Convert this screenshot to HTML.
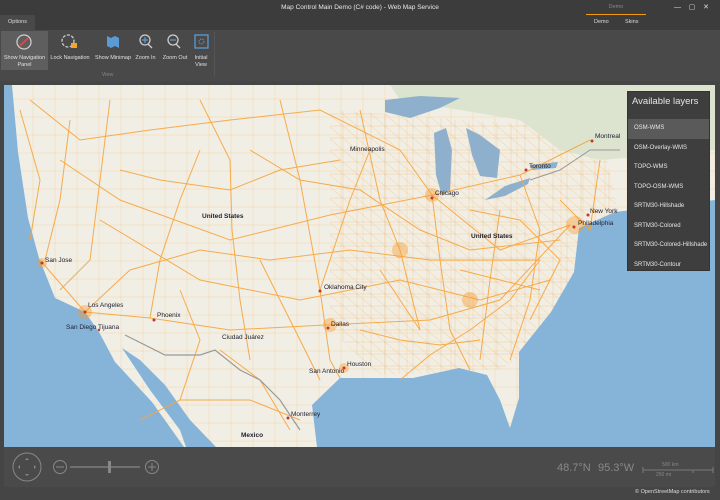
<!DOCTYPE html>
<html><head><meta charset="utf-8"><style>
*{margin:0;padding:0;box-sizing:border-box}
body{width:720px;height:500px;background:#454545;font-family:"Liberation Sans",sans-serif;position:relative;overflow:hidden;color:#ddd}
.abs{position:absolute}
.title{left:0;top:0;width:720px;height:15px;background:#3c3c3c;font-size:6.5px;text-align:center;line-height:15px;color:#e8e8e8}
.tabs{left:0;top:15px;width:720px;height:15px;background:#3c3c3c}
.ribbon{left:0;top:30px;width:720px;height:51px;background:#494949}
.btn{position:absolute;top:32px;font-size:5.5px;color:#e0e0e0;text-align:center;line-height:7px}
.lay{left:627px;top:91px;width:83px;height:180px;background:#3e3e3e;border:1px solid #333}
.lay div{height:19.5px;font-size:6px;padding-left:6px;line-height:19.5px;color:#e6e6e6}
.lbl{font-size:6.5px;color:#223;position:absolute;white-space:nowrap}
</style></head><body>
<div class="abs title">Map Control Main Demo (C# code) - Web Map Service</div>
<div class="abs" style="left:586px;top:0;width:60px;height:15px;font-size:5.5px;color:#888;text-align:center;line-height:15px">Demo</div>
<div class="abs" style="left:586px;top:14px;width:60px;height:1px;background:#f39c12"></div>
<div class="abs" style="left:674px;top:0;font-size:7px;line-height:15px;color:#ddd">—&nbsp;&nbsp;&nbsp;&nbsp;▢&nbsp;&nbsp;&nbsp;&nbsp;✕</div>
<div class="abs tabs"></div>
<div class="abs" style="left:0;top:15px;width:35px;height:15px;background:#494949;font-size:5.5px;line-height:15px;text-align:center">Options</div>
<div class="abs" style="left:594px;top:15px;font-size:5.5px;line-height:15px">Demo</div>
<div class="abs" style="left:625px;top:15px;font-size:5.5px;line-height:15px">Skins</div>
<div class="abs ribbon"></div>
<div class="abs" style="left:1px;top:31px;width:47px;height:39px;background:#5e5e5e"></div>
<svg class="abs" style="left:0;top:30px" width="220" height="30">
<circle cx="24" cy="12" r="7" fill="none" stroke="#ccc" stroke-width="1.3"/><path d="M20 16 L28 8" stroke="#e04848" stroke-width="1.8"/>
<circle cx="68" cy="11" r="6" fill="none" stroke="#ccc" stroke-width="1.3" stroke-dasharray="3 1.5"/><rect x="71" y="13" width="6" height="5" fill="#f5a623"/>
<path d="M107 6 L111 8 L115 6 L119 8 L119 18 L115 16 L111 18 L107 16Z" fill="#5b9bd5"/>
<circle cx="145" cy="10" r="5" fill="none" stroke="#ccc" stroke-width="1.3"/><path d="M148 14 L152 18" stroke="#ccc" stroke-width="1.3"/><path d="M145 7v6M142 10h6" stroke="#5b9bd5" stroke-width="1.2"/>
<circle cx="173" cy="10" r="5" fill="none" stroke="#ccc" stroke-width="1.3"/><path d="M176 14 L180 18" stroke="#ccc" stroke-width="1.3"/><path d="M170 10h6" stroke="#5b9bd5" stroke-width="1.2"/>
<rect x="195" y="5" width="13" height="13" fill="none" stroke="#5b9bd5" stroke-width="1.3"/><circle cx="201.5" cy="11.5" r="2.5" fill="none" stroke="#5b9bd5" stroke-dasharray="1.5 1"/>
</svg>
<div class="btn" style="left:2px;width:45px;top:55px">Show Navigation<br>Panel</div>
<div class="btn" style="left:50px;width:40px;top:55px">Lock Navigation</div>
<div class="btn" style="left:93px;width:40px;top:55px">Show Minimap</div>
<div class="btn" style="left:133px;width:25px;top:55px">Zoom In</div>
<div class="btn" style="left:160px;width:30px;top:55px">Zoom Out</div>
<div class="btn" style="left:190px;width:22px;top:55px">Initial<br>View</div>
<div class="btn" style="left:95px;width:25px;top:72px;color:#888">View</div>
<div class="abs" style="left:214px;top:32px;width:1px;height:44px;background:#555"></div>

<svg class="abs" style="left:4px;top:85px" width="711" height="402" viewBox="4 85 711 402">
<defs>
<pattern id="grid" width="14" height="12" patternUnits="userSpaceOnUse"><path d="M0 6h14M7 0v12M0 0l14 12" stroke="#f7a43a" stroke-width="0.5" opacity="0.45" fill="none"/></pattern>
<pattern id="grid2" width="22" height="18" patternUnits="userSpaceOnUse"><path d="M0 9h22M11 0v18" stroke="#f7a43a" stroke-width="0.5" opacity="0.35" fill="none"/></pattern>
</defs>
<rect x="4" y="85" width="711" height="402" fill="#f1eee6"/>
<rect x="4" y="85" width="711" height="402" fill="url(#grid2)"/>
<path d="M330 110 L600 130 L620 220 L560 330 L500 370 L380 375 L330 330Z" fill="url(#grid)"/>
<path d="M390 85 L715 85 L715 150 L600 160 L560 150 L520 120 L460 110 L400 100Z" fill="#dce4cf"/>
<path d="M4 85 L12 85 L18 152 L28 218 L39 258 L55 298 L85 312 L99 332 L115 362 L152 402 L184 447 L190 487 L4 487Z" fill="#86b3d8"/>
<path d="M122 348 L140 360 L165 385 L190 420 L216 447 L225 487 L200 487 L180 430 L150 390Z" fill="#86b3d8"/>
<path d="M317 487 L317 447 L312 405 L340 378 L381 378 L413 378 L459 368 L487 375 L500 400 L510 428 L519 398 L519 352 L551 312 L574 272 L579 228 L615 212 L715 200 L715 487Z" fill="#86b3d8"/>
<path d="M385 100 L420 96 L460 98 L440 108 L410 118 L385 112Z" fill="#8fb0cc"/>
<path d="M434 133 L446 128 L452 150 L450 190 L442 196 L436 175Z" fill="#8fb0cc"/>
<path d="M466 128 L480 135 L500 150 L497 178 L480 176 L472 155Z" fill="#8fb0cc"/>
<path d="M485 200 L505 186 L530 178 L528 184 L505 196Z" fill="#8fb0cc"/>
<path d="M530 165 L558 162 L556 168 L532 170Z" fill="#8fb0cc"/>
<g stroke="#f7a43a" stroke-width="1" fill="none" opacity="0.9">
<path d="M30 100 L80 140 L150 130 L230 120 L320 110 L400 150 L432 195 L520 175 L590 140"/>
<path d="M40 260 L85 312 L150 318 L230 330 L325 325 L430 320 L500 300 L570 225"/>
<path d="M60 160 L120 200 L230 240 L330 215 L432 195 L500 250 L570 225"/>
<path d="M85 312 L130 270 L200 250 L270 260 L350 250 L430 260 L540 260"/>
<path d="M320 290 L325 325 L330 360 L340 378 M320 290 L350 200 L370 150"/>
<path d="M232 230 L240 300 L250 360 M150 318 L160 260 L180 200 L200 150"/>
<path d="M432 195 L440 260 L450 330 L470 370 M500 210 L490 280 L480 360"/>
<path d="M70 120 L60 200 L45 260 M520 175 L540 230 L530 300 L510 360"/>
<path d="M100 220 L200 280 L300 300 L400 280 L480 300 L550 280"/>
<path d="M250 150 L300 180 L360 190 L420 230 L470 250 L560 240"/>
<path d="M120 170 L160 180 L230 190 L280 170 L340 160"/>
<path d="M360 330 L400 340 L440 345 L480 340 M380 270 L400 300 L420 330"/>
<path d="M140 420 L180 400 L250 400 L300 420 M220 350 L260 380 L290 430"/>
<path d="M560 200 L590 230 L600 160 M460 270 L500 280 L540 290"/>
<path d="M20 110 L40 180 L30 240 M110 100 L100 180 L90 260 L60 290"/>
<path d="M200 100 L230 160 L232 230 M280 100 L300 180 L320 290"/>
<path d="M360 110 L380 200 L400 250 L420 330 M470 210 L520 220 L560 260 L530 320"/>
<path d="M180 290 L200 340 L180 400 M260 260 L280 300 L300 340 L320 380"/>
<path d="M400 380 L430 355 L470 330 L510 300 L540 260"/>
</g>
<g fill="#f79a2a" opacity="0.4"><circle cx="432" cy="195" r="7"/><circle cx="330" cy="325" r="7"/><circle cx="85" cy="312" r="7"/><circle cx="575" cy="225" r="9"/><circle cx="470" cy="300" r="8"/><circle cx="400" cy="250" r="8"/><circle cx="42" cy="263" r="5"/><circle cx="344" cy="368" r="5"/></g>
<path d="M125 335 L165 355 L200 355 L215 350 L240 370 L260 380 L280 400 L300 430" stroke="#999" stroke-width="1.2" fill="none"/>
<path d="M530 180 L560 170 L590 150 L620 150" stroke="#999" stroke-width="1" fill="none"/>
<g fill="#c0392b"><circle cx="42" cy="263" r="1.5"/><circle cx="85" cy="312" r="1.5"/><circle cx="99" cy="330" r="1.2"/><circle cx="154" cy="320" r="1.5"/><circle cx="320" cy="291" r="1.5"/><circle cx="328" cy="328" r="1.5"/><circle cx="344" cy="368" r="1.5"/><circle cx="432" cy="198" r="1.5"/><circle cx="526" cy="170" r="1.5"/><circle cx="592" cy="141" r="1.5"/><circle cx="588" cy="215" r="1.5"/><circle cx="574" cy="227" r="1.5"/><circle cx="288" cy="418" r="1.5"/></g>
</svg>
<div class="lbl" style="left:45px;top:257px">San Jose</div>
<div class="lbl" style="left:88px;top:302px">Los Angeles</div>
<div class="lbl" style="left:66px;top:324px">San Diego Tijuana</div>
<div class="lbl" style="left:157px;top:312px">Phoenix</div>
<div class="lbl" style="left:222px;top:334px">Ciudad Juárez</div>
<div class="lbl" style="left:324px;top:284px">Oklahoma City</div>
<div class="lbl" style="left:331px;top:321px">Dallas</div>
<div class="lbl" style="left:347px;top:361px">Houston</div>
<div class="lbl" style="left:309px;top:368px">San Antonio</div>
<div class="lbl" style="left:291px;top:411px">Monterrey</div>
<div class="lbl" style="left:241px;top:432px;font-weight:bold">Mexico</div>
<div class="lbl" style="left:202px;top:213px;font-weight:bold">United States</div>
<div class="lbl" style="left:471px;top:233px;font-weight:bold">United States</div>
<div class="lbl" style="left:350px;top:146px">Minneapolis</div>
<div class="lbl" style="left:435px;top:190px">Chicago</div>
<div class="lbl" style="left:529px;top:163px">Toronto</div>
<div class="lbl" style="left:595px;top:133px">Montreal</div>
<div class="lbl" style="left:590px;top:208px">New York</div>
<div class="lbl" style="left:578px;top:220px">Philadelphia</div>

<div class="abs lay">
<div style="height:27px;font-size:9.5px;line-height:19px;padding-left:4px">Available layers</div>
<div style="background:#5a5a5a">OSM-WMS</div><div>OSM-Overlay-WMS</div><div>TOPO-WMS</div><div>TOPO-OSM-WMS</div><div>SRTM30-Hillshade</div><div>SRTM30-Colored</div><div>SRTM30-Colored-Hillshade</div><div>SRTM30-Contour</div>
</div>

<div class="abs" style="left:4px;top:447px;width:711px;height:40px;background:#4a4a4a"></div>
<svg class="abs" style="left:0;top:447px" width="720" height="40">
<circle cx="27" cy="20" r="14" fill="none" stroke="#888" stroke-width="1"/>
<path d="M27 11l-2 2h4zM27 29l-2-2h4zM18 20l2-2v4zM36 20l-2-2v4z" fill="#888"/>
<circle cx="60" cy="20" r="6.5" fill="none" stroke="#888"/><path d="M56 20h8" stroke="#888"/>
<path d="M70 20h70" stroke="#888" stroke-width="1.2"/><rect x="108" y="14" width="3" height="12" fill="#888"/>
<circle cx="152" cy="20" r="6.5" fill="none" stroke="#888"/><path d="M148 20h8M152 16v8" stroke="#888"/>
<path d="M643 20v6M643 23h70M713 20v6M693 23v3" stroke="#888" stroke-width="0.8"/>
<text x="662" y="19" font-size="5" fill="#888" font-family="Liberation Sans">500 km</text>
<text x="656" y="29" font-size="5" fill="#888" font-family="Liberation Sans">250 mi</text>
<text x="557" y="24" font-size="11" fill="#888" font-family="Liberation Sans">48.7°N</text>
<text x="598" y="24" font-size="11" fill="#888" font-family="Liberation Sans">95.3°W</text>
</svg>
<div class="abs" style="left:635px;top:489px;font-size:5.5px;color:#ddd">© OpenStreetMap contributors</div>
</body></html>
